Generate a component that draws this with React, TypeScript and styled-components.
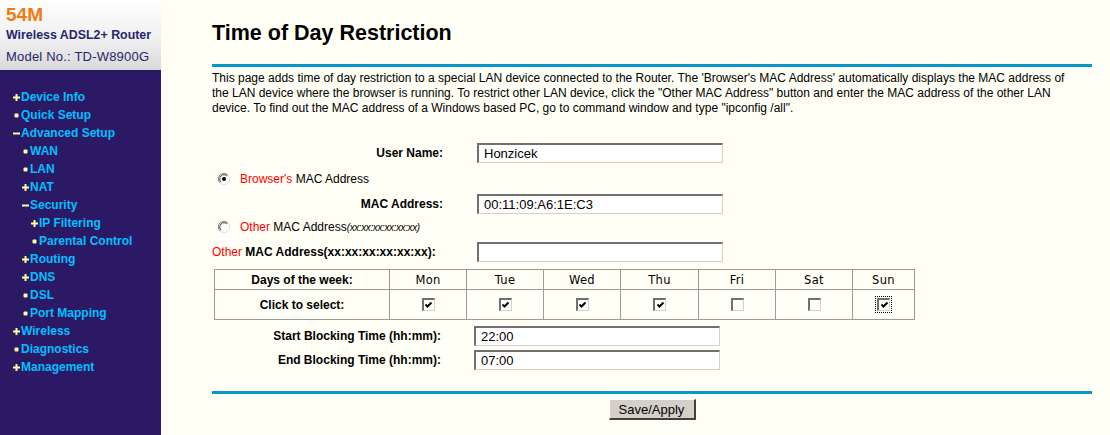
import React from 'react';
import styled, { createGlobalStyle } from 'styled-components';

const GlobalStyle = createGlobalStyle`
  body {
    margin: 0;
    background: #fffff5;
    font-family: "Liberation Sans", Arial, sans-serif;
  }
`;

type Kind = 'plus' | 'dot' | 'minus';

interface MenuItem {
  label: string;
  kind: Kind;
  level: number;
}

const menu: MenuItem[] = [
  { label: 'Device Info', kind: 'plus', level: 0 },
  { label: 'Quick Setup', kind: 'dot', level: 0 },
  { label: 'Advanced Setup', kind: 'minus', level: 0 },
  { label: 'WAN', kind: 'dot', level: 1 },
  { label: 'LAN', kind: 'dot', level: 1 },
  { label: 'NAT', kind: 'plus', level: 1 },
  { label: 'Security', kind: 'minus', level: 1 },
  { label: 'IP Filtering', kind: 'plus', level: 2 },
  { label: 'Parental Control', kind: 'dot', level: 2 },
  { label: 'Routing', kind: 'plus', level: 1 },
  { label: 'DNS', kind: 'plus', level: 1 },
  { label: 'DSL', kind: 'dot', level: 1 },
  { label: 'Port Mapping', kind: 'dot', level: 1 },
  { label: 'Wireless', kind: 'plus', level: 0 },
  { label: 'Diagnostics', kind: 'dot', level: 0 },
  { label: 'Management', kind: 'plus', level: 0 },
];

// Sun is narrower than the other day columns in the original page
const days = [
  { name: 'Mon', on: true, w: 77 },
  { name: 'Tue', on: true, w: 77 },
  { name: 'Wed', on: true, w: 77 },
  { name: 'Thu', on: true, w: 78 },
  { name: 'Fri', on: false, w: 77 },
  { name: 'Sat', on: false, w: 77 },
  { name: 'Sun', on: true, w: 62, focus: true },
];

const Bullet: React.FC<{ kind: Kind }> = ({ kind }) => (
  <BulletSvg width="7" height="7" viewBox="0 0 7 7">
    {kind === 'plus' && (
      <path d="M2.5 0h2v2.5H7v2H4.5V7h-2V4.5H0v-2h2.5z" fill="#ffff99" />
    )}
    {kind === 'dot' && <rect x="1.5" y="1.5" width="4" height="4" rx="1" fill="#ffff99" />}
    {kind === 'minus' && <rect x="0" y="2.5" width="7" height="2" fill="#ffff99" />}
  </BulletSvg>
);

const Check: React.FC<{ on: boolean; focus?: boolean }> = ({ on, focus }) => (
  <CheckWrap $focus={focus}>
    <CheckBox>
      {on && (
        <svg width="9" height="9" viewBox="0 0 9 9">
          <path d="M1.5 3.5L3.5 5.5L7.5 1.5" stroke="#000" strokeWidth="2" fill="none" />
        </svg>
      )}
    </CheckBox>
  </CheckWrap>
);

const Radio: React.FC<{ on: boolean }> = ({ on }) => (
  <RadioSvg width="12" height="12" viewBox="0 0 12 12">
    <circle cx="6" cy="6" r="5.5" fill="#fff" />
    <path d="M10 2A5.5 5.5 0 0 0 2 10" stroke="#808080" strokeWidth="1" fill="none" />
    <path d="M2 10A5.5 5.5 0 0 0 10 2" stroke="#e0e0e0" strokeWidth="1" fill="none" />
    <path d="M9 3A4.2 4.2 0 0 0 3 9" stroke="#404040" strokeWidth="1" fill="none" />
    {on && <circle cx="6" cy="6" r="2" fill="#000" />}
  </RadioSvg>
);

export default function App() {
  return (
    <Page>
      <GlobalStyle />
      <Sidebar>
        <Logo>
          <Speed>54M</Speed>
          <Product>Wireless ADSL2+ Router</Product>
          <Model>Model No.: TD-W8900G</Model>
        </Logo>
        <Menu>
          {menu.map((m) => (
            <MenuRow key={m.label} $level={m.level}>
              <Bullet kind={m.kind} />
              <span>{m.label}</span>
            </MenuRow>
          ))}
        </Menu>
      </Sidebar>

      <Main>
        <Title>Time of Day Restriction</Title>
        <Rule />
        <Intro>
          This page adds time of day restriction to a special LAN device connected to the Router. The
          'Browser's MAC Address' automatically displays the MAC address of the LAN device where the
          browser is running. To restrict other LAN device, click the "Other MAC Address" button and
          enter the MAC address of the other LAN device. To find out the MAC address of a Windows based
          PC, go to command window and type "ipconfig /all".
        </Intro>

        <FieldRow $h={24} $mt={25}>
          <Label>User Name:</Label>
          <TextInput defaultValue="Honzicek" />
        </FieldRow>
        <RadioRow $h={28}>
          <Radio on />
          <span>
            <Red>Browser's</Red> MAC Address
          </span>
        </RadioRow>
        <FieldRow $h={22}>
          <Label>MAC Address:</Label>
          <TextInput defaultValue="00:11:09:A6:1E:C3" />
        </FieldRow>
        <RadioRow $h={24}>
          <Radio on={false} />
          <span>
            <Red>Other</Red> MAC Address<Hint>(xx:xx:xx:xx:xx:xx)</Hint>
          </span>
        </RadioRow>
        <FieldRow $h={25}>
          <LeftLabel>
            <Red>Other</Red> <b>MAC Address(xx:xx:xx:xx:xx:xx):</b>
          </LeftLabel>
          <TextInput defaultValue="" />
        </FieldRow>

        <DayTable>
          <colgroup>
            <col style={{ width: 175 }} />
            {days.map((d) => (
              <col key={d.name} style={{ width: d.w }} />
            ))}
          </colgroup>
          <tbody>
            <tr>
              <HeadCell>Days of the week:</HeadCell>
              {days.map((d) => (
                <DayCell key={d.name}>{d.name}</DayCell>
              ))}
            </tr>
            <TallRow>
              <HeadCell>Click to select:</HeadCell>
              {days.map((d) => (
                <DayCell key={d.name}>
                  <Check on={d.on} focus={d.focus} />
                </DayCell>
              ))}
            </TallRow>
          </tbody>
        </DayTable>

        <TimeRow $h={25} $mt={3}>
          <Label>Start Blocking Time (hh:mm):</Label>
          <TextInput defaultValue="22:00" />
        </TimeRow>
        <TimeRow $h={23}>
          <Label>End Blocking Time (hh:mm):</Label>
          <TextInput defaultValue="07:00" />
        </TimeRow>

        <Rule $mt={20} />
        <Actions>
          <SaveButton>Save/Apply</SaveButton>
        </Actions>
      </Main>
    </Page>
  );
}

const Page = styled.div`
  display: flex;
  min-height: 435px;
`;

const Sidebar = styled.div`
  width: 161px;
  flex-shrink: 0;
  background: #2b1966;
  display: flex;
  flex-direction: column;
`;

const Logo = styled.div`
  height: 70px;
  box-sizing: border-box;
  padding: 4px 0 0 6px;
  background: linear-gradient(to bottom, #ffffff 0%, #eeeeee 60%, #d9d9d9 100%);
  color: #26266e;
`;

const Speed = styled.div`
  font-size: 19px;
  font-weight: bold;
  color: #f07a10;
  line-height: 22px;
`;

const Product = styled.div`
  font-size: 12.4px;
  font-weight: bold;
  line-height: 19px;
`;

const Model = styled.div`
  font-size: 13px;
  line-height: 23px;
  letter-spacing: 0.2px;
`;

const Menu = styled.div`
  padding-top: 18px;
  display: flex;
  flex-direction: column;
`;

const MenuRow = styled.div<{ $level: number }>`
  display: flex;
  align-items: center;
  height: 18px;
  padding-left: ${(p) => 13 + p.$level * 9}px;
  font-size: 12px;
  font-weight: bold;
  color: #00c0ff;
`;

const BulletSvg = styled.svg`
  margin-right: 1px;
  flex-shrink: 0;
`;

const Main = styled.div`
  flex: 1;
  padding: 19px 18px 0 51px;
  display: flex;
  flex-direction: column;
  font-size: 12px;
  color: #000;
`;

const Title = styled.div`
  font-size: 21.5px;
  font-weight: bold;
  line-height: 28px;
  height: 45px;
`;

const Rule = styled.div<{ $mt?: number }>`
  height: 3px;
  background: #0898cc;
  margin-top: ${(p) => p.$mt ?? 0}px;
`;

const Intro = styled.p`
  margin: 4px 0 0 0;
  line-height: 15px;
  padding-right: 8px;
`;

const FieldRow = styled.div<{ $h: number; $mt?: number }>`
  display: grid;
  grid-template-columns: 231px 246px;
  column-gap: 34px;
  align-items: center;
  height: ${(p) => p.$h}px;
  margin-top: ${(p) => p.$mt ?? 0}px;
`;

const TimeRow = styled(FieldRow)`
  grid-template-columns: 229px 246px;
  column-gap: 33px;
`;

const Label = styled.div`
  text-align: right;
  font-weight: bold;
`;

const LeftLabel = styled.div`
  white-space: nowrap;
`;

const Red = styled.span`
  color: #ff0000;
`;

const Hint = styled.span`
  font-size: 10px;
  font-style: italic;
  letter-spacing: -0.4px;
`;

const RadioRow = styled.div<{ $h: number }>`
  display: flex;
  align-items: center;
  gap: 10px;
  height: ${(p) => p.$h}px;
  padding-left: 6px;
`;

const RadioSvg = styled.svg`
  flex-shrink: 0;
`;

const TextInput = styled.input`
  box-sizing: border-box;
  height: 20px;
  width: 246px;
  padding: 0 5px;
  font-family: "Liberation Sans", Arial, sans-serif;
  font-size: 13px;
  background: #fff;
  border-style: solid;
  border-width: 2px 1px 1px 2px;
  border-color: #707070 #d4d0c8 #d4d0c8 #707070;
  outline: none;
`;

const DayTable = styled.table`
  margin-top: 5px;
  margin-left: 2px;
  width: 700px;
  table-layout: fixed;
  border-collapse: collapse;
  border: 1px solid #8a8a8a;
  font-size: 12px;

  td {
    border: 1px solid #9a9a9a;
    height: 19px;
    padding: 0;
  }
`;

const TallRow = styled.tr`
  td {
    height: 29px;
  }
`;

const HeadCell = styled.td`
  text-align: center;
  font-weight: bold;
`;

const DayCell = styled.td`
  text-align: center;
  font-family: "DejaVu Sans", sans-serif;
  font-size: 11.5px;
  letter-spacing: 0.3px;
`;

const CheckWrap = styled.span<{ $focus?: boolean }>`
  display: inline-flex;
  padding: 1px;
  vertical-align: middle;
  outline: ${(p) => (p.$focus ? '1px dotted #000' : 'none')};
`;

const CheckBox = styled.span`
  display: inline-flex;
  align-items: center;
  justify-content: center;
  box-sizing: border-box;
  width: 13px;
  height: 13px;
  background: #fff;
  border-style: solid;
  border-width: 2px 1px 1px 2px;
  border-color: #707070 #d4d0c8 #d4d0c8 #707070;
`;

const Actions = styled.div`
  display: flex;
  justify-content: center;
  margin-top: 5px;
`;

const SaveButton = styled.button`
  height: 21px;
  width: 87px;
  padding: 0;
  font-family: "Liberation Sans Narrow", "Liberation Sans", Arial, sans-serif;
  font-size: 13px;
  color: #000;
  background: #d4d0c8;
  border-style: solid;
  border-width: 1px 2px 2px 1px;
  border-color: #ffffff #404040 #404040 #ffffff;
`;
